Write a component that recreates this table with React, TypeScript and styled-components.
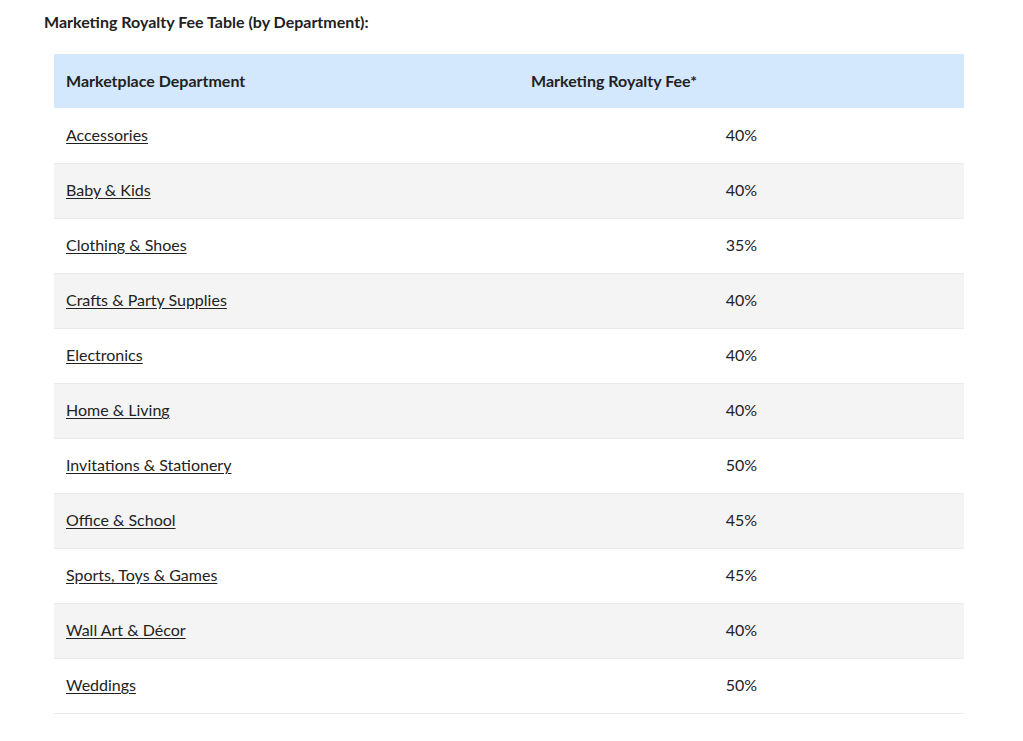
import styled, { createGlobalStyle } from 'styled-components';

const GlobalStyle = createGlobalStyle`
  body {
    margin: 0;
    background: #fff;
    font-family: Lato, 'Open Sans', Arial, sans-serif;
    color: #222;
  }
`;

const rows = [
  { name: 'Accessories', fee: '40%' },
  { name: 'Baby & Kids', fee: '40%' },
  { name: 'Clothing & Shoes', fee: '35%' },
  { name: 'Crafts & Party Supplies', fee: '40%' },
  { name: 'Electronics', fee: '40%' },
  { name: 'Home & Living', fee: '40%' },
  { name: 'Invitations & Stationery', fee: '50%' },
  { name: 'Office & School', fee: '45%' },
  { name: 'Sports, Toys & Games', fee: '45%' },
  { name: 'Wall Art & Décor', fee: '40%' },
  { name: 'Weddings', fee: '50%' },
];

export default function App() {
  return (
    <>
      <GlobalStyle />
      <Page>
        <Title>Marketing Royalty Fee Table (by Department):</Title>
        <Table>
          <thead>
            <HeadRow>
              <HeadCell $width={441}>Marketplace Department</HeadCell>
              <HeadCell>Marketing Royalty Fee*</HeadCell>
            </HeadRow>
          </thead>
          <tbody>
            {rows.map((row, i) => (
              <BodyRow key={row.name} $striped={i % 2 === 1}>
                <Cell>
                  <DeptLink href="#">{row.name}</DeptLink>
                </Cell>
                <FeeCell>{row.fee}</FeeCell>
              </BodyRow>
            ))}
          </tbody>
        </Table>
      </Page>
    </>
  );
}

const Page = styled.div`
  padding: 12px 0 0 44px;
  width: 920px;
`;

const Title = styled.h3`
  margin: 0 0 22px 0;
  font-size: 16px;
  line-height: 20px;
  font-weight: 700;
  color: #222;
`;

const Table = styled.table`
  margin-left: 10px;
  width: 910px;
  border-collapse: collapse;
  table-layout: fixed;
  font-size: 16px;
`;

const HeadRow = styled.tr`
  background: #d3e8fd;
  height: 54px;
`;

const HeadCell = styled.th<{ $width?: number }>`
  width: ${({ $width }) => ($width ? `${$width}px` : 'auto')};
  padding: 0 12px 2px;
  text-align: left;
  font-weight: 700;
  color: #222;
`;

const BodyRow = styled.tr<{ $striped: boolean }>`
  height: 55px;
  background: ${({ $striped }) => ($striped ? '#f4f4f4' : '#fff')};
  border-bottom: 1px solid #ebebeb;
`;

const Cell = styled.td`
  padding: 0 12px 2px;
`;

const FeeCell = styled.td`
  padding: 0 12px 2px;
  text-align: center;
  color: #222;
`;

const DeptLink = styled.a`
  color: #222;
  text-decoration: underline;
  text-underline-offset: 2px;
`;
